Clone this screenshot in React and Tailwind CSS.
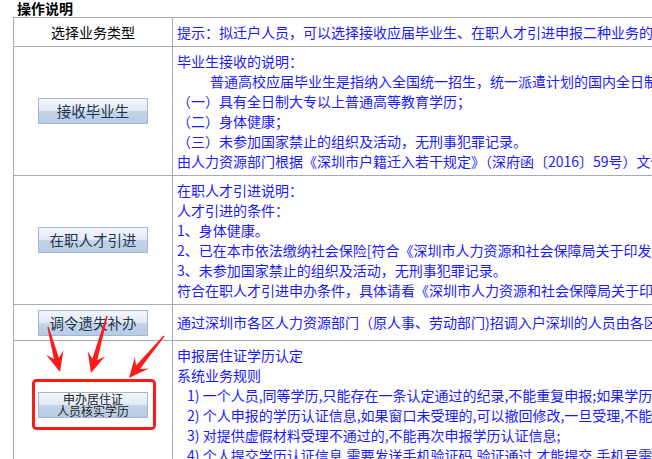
import React from "react";

const line = "border-[#a4abb8]";

const arrow = (tx, ty, hx, hy) => {
  const dx = hx - tx;
  const dy = hy - ty;
  const len = Math.sqrt(dx * dx + dy * dy);
  const ux = dx / len;
  const uy = dy / len;
  const nx = -uy;
  const ny = ux;
  const headLen = 20;
  const wing = 9;
  const neck = 2.6;
  const tail = 0.7;
  const p = (x, y) => `${x.toFixed(1)},${y.toFixed(1)}`;
  const bx = hx - ux * headLen;
  const by = hy - uy * headLen;
  const kx = hx - ux * (headLen - 6);
  const ky = hy - uy * (headLen - 6);
  return [
    p(tx + nx * tail, ty + ny * tail),
    p(kx + nx * neck, ky + ny * neck),
    p(bx + nx * wing, by + ny * wing),
    p(hx, hy),
    p(bx - nx * wing, by - ny * wing),
    p(kx - nx * neck, ky - ny * neck),
    p(tx - nx * tail, ty - ny * tail),
  ].join(" ");
};

const Btn = ({ children, small }) => (
  <div
    className={`w-[110px] h-[26px] border border-[#a3b7d4] bg-[linear-gradient(to_bottom,#f4f7fb_0%,#e2e9f3_48%,#c4d4e9_52%,#b8cbe3_100%)] flex flex-col items-center justify-center ${
      small
        ? "text-[12px] leading-[12px] text-[#222]"
        : "text-[14.5px] leading-[20px] text-[#223650]"
    }`}
  >
    {children}
  </div>
);

const App = () => {
  return (
    <div
      className="relative w-[652px] h-[459px] overflow-hidden bg-white"
      style={{ fontFamily: '"Noto Sans CJK SC", "Noto Sans", sans-serif' }}
    >
      <div className="pl-[17px] h-[17px] text-[14px] leading-[17px] font-bold text-black">
        操作说明
      </div>

      <div className={`ml-[13px] w-[900px] border-t border-l ${line}`}>
        {/* 选择业务类型 */}
        <div className={`flex h-[29px] border-b ${line}`}>
          <div className={`w-[159px] shrink-0 border-r ${line} flex items-center justify-center text-[14px] text-black`}>
            选择业务类型
          </div>
          <div className="pl-[4px] flex items-center text-[14px] text-[#1a1aff] whitespace-nowrap">
            提示：拟迁户人员，可以选择接收应届毕业生、在职人才引进申报二种业务的申报。
          </div>
        </div>

        {/* 接收毕业生 */}
        <div className={`flex border-b ${line}`}>
          <div className={`w-[159px] shrink-0 border-r ${line} flex items-center justify-center`}>
            <Btn>接收毕业生</Btn>
          </div>
          <div className="pl-[4px] py-[4px] text-[14px] leading-[20px] text-[#1a1aff] whitespace-nowrap">
            <div>毕业生接收的说明：</div>
            <div className="pl-[33px]">
              普通高校应届毕业生是指纳入全国统一招生，统一派遣计划的国内全日制普通高等学校毕业生。
            </div>
            <div>（一）具有全日制大专以上普通高等教育学历；</div>
            <div>（二）身体健康；</div>
            <div>（三）未参加国家禁止的组织及活动，无刑事犯罪记录。</div>
            <div>
              由人力资源部门根据《深圳市户籍迁入若干规定》（深府函〔2016〕59号）文件规定办理。
            </div>
          </div>
        </div>

        {/* 在职人才引进 */}
        <div className={`flex border-b ${line}`}>
          <div className={`w-[159px] shrink-0 border-r ${line} flex items-center justify-center`}>
            <Btn>在职人才引进</Btn>
          </div>
          <div className="pl-[4px] py-[4px] text-[14px] leading-[20px] text-[#1a1aff] whitespace-nowrap">
            <div>在职人才引进说明：</div>
            <div>人才引进的条件：</div>
            <div>1、身体健康。</div>
            <div>
              2、已在本市依法缴纳社会保险[符合《深圳市人力资源和社会保障局关于印发在职人才引进办法的通知》]
            </div>
            <div>3、未参加国家禁止的组织及活动，无刑事犯罪记录。</div>
            <div>
              符合在职人才引进申办条件，具体请看《深圳市人力资源和社会保障局关于印发在职人才引进办法的通知》
            </div>
          </div>
        </div>

        {/* 调令遗失补办 */}
        <div className={`flex h-[36px] border-b ${line}`}>
          <div className={`w-[159px] shrink-0 border-r ${line} flex items-center justify-center`}>
            <Btn>调令遗失补办</Btn>
          </div>
          <div className="pl-[4px] flex items-center text-[14px] text-[#1a1aff] whitespace-nowrap">
            通过深圳市各区人力资源部门（原人事、劳动部门)招调入户深圳的人员由各区人力资源部门补办调令。
          </div>
        </div>

        {/* 申办居住证人员核实学历 */}
        <div className={`flex border-b ${line}`}>
          <div className={`w-[159px] shrink-0 border-r ${line} flex items-center justify-center`}>
            <Btn small>
              <span>申办居住证</span>
              <span>人员核实学历</span>
            </Btn>
          </div>
          <div className="pl-[4px] py-[4px] text-[14px] leading-[20px] text-[#1a1aff] whitespace-nowrap">
            <div>申报居住证学历认定</div>
            <div>系统业务规则</div>
            <div className="pl-[10px]">
              1) 一个人员,同等学历,只能存在一条认定通过的纪录,不能重复申报;如果学历认定有误,请到窗口撤销。
            </div>
            <div className="pl-[10px]">
              2) 个人申报的学历认证信息,如果窗口未受理的,可以撤回修改,一旦受理,不能撤回修改;
            </div>
            <div className="pl-[10px]">
              3) 对提供虚假材料受理不通过的,不能再次申报学历认证信息;
            </div>
            <div className="pl-[10px]">
              4) 个人提交学历认证信息,需要发送手机验证码,验证通过,才能提交,手机号需真实有效;
            </div>
          </div>
        </div>
      </div>

      {/* 标注：红框与箭头 */}
      <svg
        className="absolute top-0 left-0 pointer-events-none"
        width="652"
        height="459"
        viewBox="0 0 652 459"
      >
        <rect
          x="33.5"
          y="380.5"
          width="121"
          height="48"
          rx="3"
          fill="none"
          stroke="#ff1a1a"
          strokeWidth="3"
        />
        <polygon points={arrow(48, 327, 60, 372)} fill="#ff1a1a" />
        <polygon points={arrow(107, 316, 91, 373)} fill="#ff1a1a" />
        <polygon points={arrow(164, 336, 129, 378)} fill="#ff1a1a" />
      </svg>
    </div>
  );
};

export default App;
